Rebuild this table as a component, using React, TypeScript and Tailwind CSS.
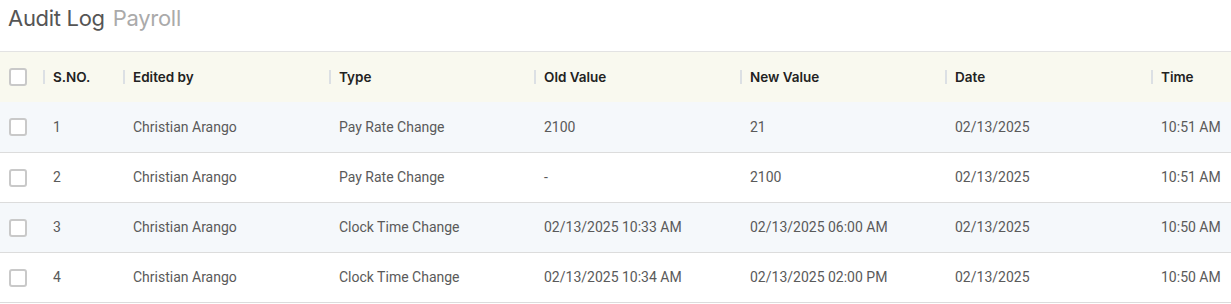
import React from "react";

const cols = "grid grid-cols-[43px_80px_206px_205px_206px_205px_206px_80px]";

const rows = [
  ["1", "Christian Arango", "Pay Rate Change", "2100", "21", "02/13/2025", "10:51 AM"],
  ["2", "Christian Arango", "Pay Rate Change", "-", "2100", "02/13/2025", "10:51 AM"],
  ["3", "Christian Arango", "Clock Time Change", "02/13/2025 10:33 AM", "02/13/2025 06:00 AM", "02/13/2025", "10:50 AM"],
  ["4", "Christian Arango", "Clock Time Change", "02/13/2025 10:34 AM", "02/13/2025 02:00 PM", "02/13/2025", "10:50 AM"],
];

const headers = ["S.NO.", "Edited by", "Type", "Old Value", "New Value", "Date", "Time"];

function Box() {
  return <div className="w-[18px] h-[18px] rounded-[3px] border-2 border-[#c9c9c9] bg-white" />;
}

export default function App() {
  return (
    <div className="w-[1231px] h-[304px] bg-white overflow-hidden" style={{ fontFamily: "Roboto, sans-serif" }}>
      <div className="h-[51px] flex items-start pt-[3px] pl-[8px] gap-[8px] text-[22px] leading-[30px]" style={{ fontFamily: "Inter, sans-serif" }}>
        <span className="text-[#555555] tracking-[-0.3px]">Audit Log</span>
        <span className="text-[#aaaaaa] tracking-[-0.3px]">Payroll</span>
      </div>
      <div className="border-t border-[#e3e3e3]">
        <div className={`${cols} h-[50px] bg-[#f9f9ef] items-center`} style={{ fontFamily: "Inter, sans-serif" }}>
          <div className="flex items-center pl-[9px]"><Box /></div>
          {headers.map((h) => (
            <div key={h} className="flex items-center">
              <div className="w-[2px] h-[14px] bg-[#dce0e4]" />
              <span className="pl-[8px] text-[13.5px] font-semibold text-[#222222]">{h}</span>
            </div>
          ))}
        </div>
        {rows.map((r, i) => (
          <div
            key={i}
            className={`${cols} ${i === 0 ? "h-[51px]" : "h-[50px]"} items-center border-b border-[#dcdcdc] ${i % 2 === 0 ? "bg-[#f5f8fb]" : "bg-white"}`}
          >
            <div className="flex items-center pl-[9px]"><Box /></div>
            {r.map((c, j) => (
              <div key={j} className="pl-[10px] text-[14px] text-[#5a5a5a] whitespace-nowrap">{c}</div>
            ))}
          </div>
        ))}
      </div>
    </div>
  );
}
